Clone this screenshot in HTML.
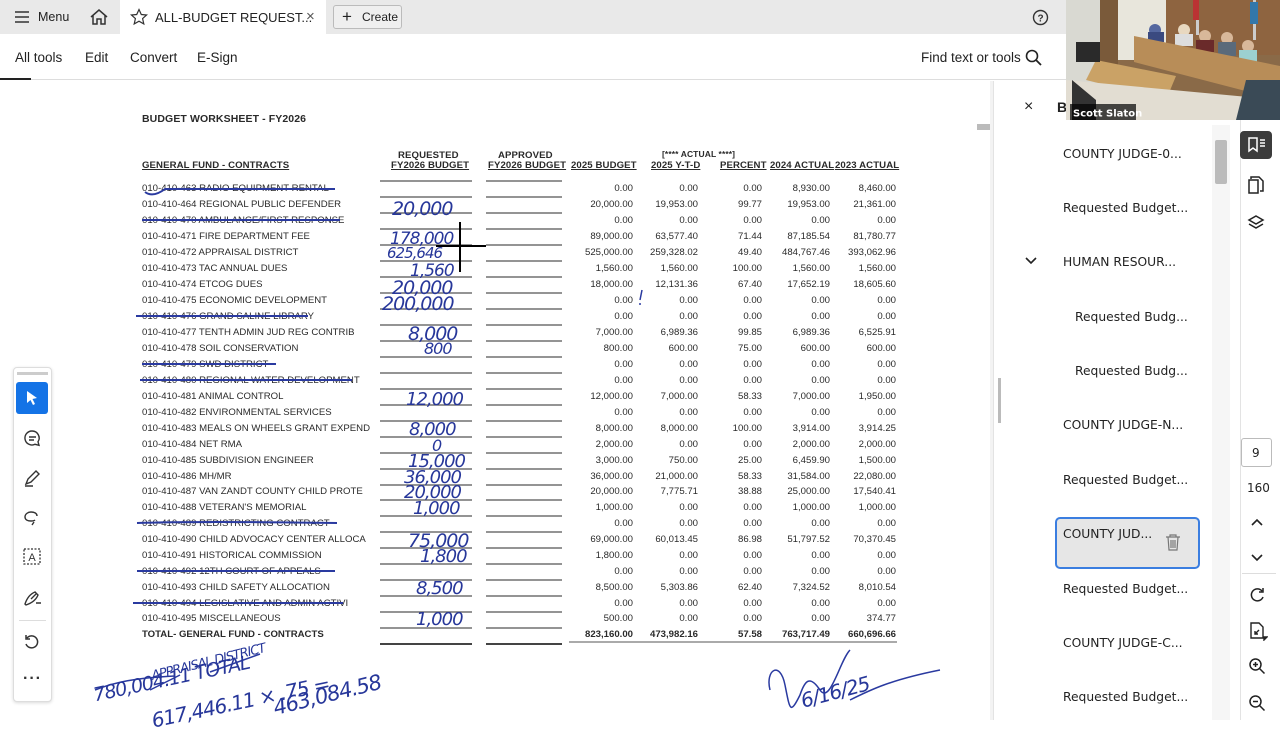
<!DOCTYPE html>
<html><head><meta charset="utf-8"><style>
*{margin:0;padding:0;box-sizing:border-box}
body{width:1280px;height:720px;overflow:hidden;background:#fff;font-family:"Liberation Sans",Arial,sans-serif;position:relative;color:#222}
.a{position:absolute}
.top{left:0;top:0;width:1280px;height:34px;background:#e9e9e9}
.t{font-size:12.5px;color:#222;white-space:nowrap}
.tb{left:0;top:34px;width:1280px;height:46px;background:#fff;border-bottom:1px solid #ddd}
.doc{font-size:9.6px;color:#2a2a2a;white-space:nowrap;letter-spacing:0.1px}
.r{position:absolute;left:0;width:990px;height:12px}
.r span{position:absolute;top:0;font-size:9.6px;color:#2a2a2a;white-space:nowrap}
.n{left:142px}
.c1,.c2,.c3,.c4,.c5{text-align:right}
.c1{left:553px;width:80px}.c2{left:618px;width:80px}.c3{left:702px;width:60px}.c4{left:750px;width:80px}.c5{left:816px;width:80px}
.hw{position:absolute;font-family:"DejaVu Sans",sans-serif;font-style:italic;color:#27379a;font-size:17px;letter-spacing:-1px;white-space:nowrap}
.rp{font-size:13.5px;color:#222;white-space:nowrap}
.ic{position:absolute}
</style></head><body>
<div class="a top"></div>
<div class="a" style="left:120px;top:0;width:206px;height:34px;background:#fff"></div>
<svg class="ic" style="left:14px;top:10px" width="16" height="14"><path d="M1 2h14M1 7h14M1 12h14" stroke="#333" stroke-width="1.5"/></svg>
<div class="a t" style="left:38px;top:10px">Menu</div>
<svg class="ic" style="left:89px;top:8px" width="20" height="18"><path d="M2 9L10 2l8 7M4 7v9h4v-5h4v5h4V7" fill="none" stroke="#333" stroke-width="1.5"/></svg>
<svg class="ic" style="left:130px;top:8px" width="18" height="18"><path d="M9 1.5l2.3 5 5.3.5-4 3.6 1.2 5.3L9 13.2l-4.8 2.7 1.2-5.3-4-3.6 5.3-.5z" fill="none" stroke="#333" stroke-width="1.2"/></svg>
<div class="a t" style="left:155px;top:10px;font-size:13px">ALL-BUDGET REQUEST...</div>
<div class="a t" style="left:306px;top:8px;font-size:15px;color:#555">×</div>
<div class="a" style="left:333px;top:5px;width:69px;height:24px;border:1px solid #bbb;border-radius:3px;background:#efefef"></div>
<div class="a t" style="left:342px;top:7px;font-size:17px">+</div>
<div class="a t" style="left:362px;top:10px;font-size:12px">Create</div>
<svg class="ic" style="left:1032px;top:9px" width="17" height="17"><circle cx="8.5" cy="8.5" r="7" fill="none" stroke="#333" stroke-width="1.4"/><text x="8.5" y="12.5" font-size="10" text-anchor="middle" font-family="Liberation Sans" font-weight="bold" fill="#333">?</text></svg>

<div class="a tb"></div>
<div class="a rp" style="left:15px;top:50px">All tools</div>
<div class="a" style="left:0;top:78px;width:31px;height:2px;background:#222"></div>
<div class="a rp" style="left:85px;top:50px">Edit</div>
<div class="a rp" style="left:130px;top:50px">Convert</div>
<div class="a rp" style="left:197px;top:50px">E-Sign</div>
<div class="a rp" style="left:921px;top:50px">Find text or tools</div>
<svg class="ic" style="left:1025px;top:49px" width="18" height="18"><circle cx="7" cy="7" r="5.5" fill="none" stroke="#222" stroke-width="1.6"/><path d="M11 11l5 5" stroke="#222" stroke-width="1.8"/></svg>

<div class="a" style="left:977px;top:124px;width:13px;height:6px;background:#bbb"></div>
<div class="a" style="left:990px;top:81px;width:3px;height:639px;background:#f3f3f3"></div>

<div class="a doc" style="left:142px;top:113px;font-weight:bold;font-size:10.5px">BUDGET WORKSHEET - FY2026</div>
<div class="a doc" style="left:142px;top:160px;font-weight:bold;text-decoration:underline">GENERAL FUND -  CONTRACTS</div>
<div class="a doc" style="left:398px;top:150px;font-weight:bold">REQUESTED</div>
<div class="a doc" style="left:391px;top:160px;font-weight:bold;text-decoration:underline">FY2026 BUDGET</div>
<div class="a doc" style="left:498px;top:150px;font-weight:bold">APPROVED</div>
<div class="a doc" style="left:488px;top:160px;font-weight:bold;text-decoration:underline">FY2026 BUDGET</div>
<div class="a doc" style="left:571px;top:160px;font-weight:bold;text-decoration:underline">2025 BUDGET</div>
<div class="a doc" style="left:662px;top:149px;font-weight:bold;font-size:8.5px">[**** ACTUAL ****]</div>
<div class="a doc" style="left:651px;top:160px;font-weight:bold;text-decoration:underline">2025 Y-T-D</div>
<div class="a doc" style="left:720px;top:160px;font-weight:bold;text-decoration:underline">PERCENT</div>
<div class="a doc" style="left:770px;top:160px;font-weight:bold;text-decoration:underline">2024 ACTUAL</div>
<div class="a doc" style="left:835px;top:160px;font-weight:bold;text-decoration:underline">2023 ACTUAL</div>

<div class="r" style="top:183px"><span class="n">010-410-463 RADIO EQUIPMENT RENTAL</span><span class="c1">0.00</span><span class="c2">0.00</span><span class="c3">0.00</span><span class="c4">8,930.00</span><span class="c5">8,460.00</span></div>
<div class="r" style="top:199px"><span class="n">010-410-464 REGIONAL PUBLIC DEFENDER</span><span class="c1">20,000.00</span><span class="c2">19,953.00</span><span class="c3">99.77</span><span class="c4">19,953.00</span><span class="c5">21,361.00</span></div>
<div class="r" style="top:215px"><span class="n">010-410-470 AMBULANCE/FIRST RESPONSE</span><span class="c1">0.00</span><span class="c2">0.00</span><span class="c3">0.00</span><span class="c4">0.00</span><span class="c5">0.00</span></div>
<div class="r" style="top:231px"><span class="n">010-410-471 FIRE DEPARTMENT FEE</span><span class="c1">89,000.00</span><span class="c2">63,577.40</span><span class="c3">71.44</span><span class="c4">87,185.54</span><span class="c5">81,780.77</span></div>
<div class="r" style="top:247px"><span class="n">010-410-472 APPRAISAL DISTRICT</span><span class="c1">525,000.00</span><span class="c2">259,328.02</span><span class="c3">49.40</span><span class="c4">484,767.46</span><span class="c5">393,062.96</span></div>
<div class="r" style="top:263px"><span class="n">010-410-473 TAC ANNUAL DUES</span><span class="c1">1,560.00</span><span class="c2">1,560.00</span><span class="c3">100.00</span><span class="c4">1,560.00</span><span class="c5">1,560.00</span></div>
<div class="r" style="top:279px"><span class="n">010-410-474 ETCOG DUES</span><span class="c1">18,000.00</span><span class="c2">12,131.36</span><span class="c3">67.40</span><span class="c4">17,652.19</span><span class="c5">18,605.60</span></div>
<div class="r" style="top:295px"><span class="n">010-410-475 ECONOMIC DEVELOPMENT</span><span class="c1">0.00</span><span class="c2">0.00</span><span class="c3">0.00</span><span class="c4">0.00</span><span class="c5">0.00</span></div>
<div class="r" style="top:311px"><span class="n">010-410-476 GRAND SALINE LIBRARY</span><span class="c1">0.00</span><span class="c2">0.00</span><span class="c3">0.00</span><span class="c4">0.00</span><span class="c5">0.00</span></div>
<div class="r" style="top:327px"><span class="n">010-410-477 TENTH ADMIN JUD REG CONTRIB</span><span class="c1">7,000.00</span><span class="c2">6,989.36</span><span class="c3">99.85</span><span class="c4">6,989.36</span><span class="c5">6,525.91</span></div>
<div class="r" style="top:343px"><span class="n">010-410-478 SOIL CONSERVATION</span><span class="c1">800.00</span><span class="c2">600.00</span><span class="c3">75.00</span><span class="c4">600.00</span><span class="c5">600.00</span></div>
<div class="r" style="top:359px"><span class="n">010-410-479 SWD DISTRICT</span><span class="c1">0.00</span><span class="c2">0.00</span><span class="c3">0.00</span><span class="c4">0.00</span><span class="c5">0.00</span></div>
<div class="r" style="top:375px"><span class="n">010-410-480 REGIONAL WATER DEVELOPMENT</span><span class="c1">0.00</span><span class="c2">0.00</span><span class="c3">0.00</span><span class="c4">0.00</span><span class="c5">0.00</span></div>
<div class="r" style="top:391px"><span class="n">010-410-481 ANIMAL CONTROL</span><span class="c1">12,000.00</span><span class="c2">7,000.00</span><span class="c3">58.33</span><span class="c4">7,000.00</span><span class="c5">1,950.00</span></div>
<div class="r" style="top:407px"><span class="n">010-410-482 ENVIRONMENTAL SERVICES</span><span class="c1">0.00</span><span class="c2">0.00</span><span class="c3">0.00</span><span class="c4">0.00</span><span class="c5">0.00</span></div>
<div class="r" style="top:423px"><span class="n">010-410-483 MEALS ON WHEELS GRANT EXPEND</span><span class="c1">8,000.00</span><span class="c2">8,000.00</span><span class="c3">100.00</span><span class="c4">3,914.00</span><span class="c5">3,914.25</span></div>
<div class="r" style="top:439px"><span class="n">010-410-484 NET RMA</span><span class="c1">2,000.00</span><span class="c2">0.00</span><span class="c3">0.00</span><span class="c4">2,000.00</span><span class="c5">2,000.00</span></div>
<div class="r" style="top:455px"><span class="n">010-410-485 SUBDIVISION ENGINEER</span><span class="c1">3,000.00</span><span class="c2">750.00</span><span class="c3">25.00</span><span class="c4">6,459.90</span><span class="c5">1,500.00</span></div>
<div class="r" style="top:471px"><span class="n">010-410-486 MH/MR</span><span class="c1">36,000.00</span><span class="c2">21,000.00</span><span class="c3">58.33</span><span class="c4">31,584.00</span><span class="c5">22,080.00</span></div>
<div class="r" style="top:486px"><span class="n">010-410-487 VAN ZANDT COUNTY CHILD PROTE</span><span class="c1">20,000.00</span><span class="c2">7,775.71</span><span class="c3">38.88</span><span class="c4">25,000.00</span><span class="c5">17,540.41</span></div>
<div class="r" style="top:502px"><span class="n">010-410-488 VETERAN'S MEMORIAL</span><span class="c1">1,000.00</span><span class="c2">0.00</span><span class="c3">0.00</span><span class="c4">1,000.00</span><span class="c5">1,000.00</span></div>
<div class="r" style="top:518px"><span class="n">010-410-489 REDISTRICTING CONTRACT</span><span class="c1">0.00</span><span class="c2">0.00</span><span class="c3">0.00</span><span class="c4">0.00</span><span class="c5">0.00</span></div>
<div class="r" style="top:534px"><span class="n">010-410-490 CHILD ADVOCACY CENTER ALLOCA</span><span class="c1">69,000.00</span><span class="c2">60,013.45</span><span class="c3">86.98</span><span class="c4">51,797.52</span><span class="c5">70,370.45</span></div>
<div class="r" style="top:550px"><span class="n">010-410-491 HISTORICAL COMMISSION</span><span class="c1">1,800.00</span><span class="c2">0.00</span><span class="c3">0.00</span><span class="c4">0.00</span><span class="c5">0.00</span></div>
<div class="r" style="top:566px"><span class="n">010-410-492 12TH COURT OF APPEALS</span><span class="c1">0.00</span><span class="c2">0.00</span><span class="c3">0.00</span><span class="c4">0.00</span><span class="c5">0.00</span></div>
<div class="r" style="top:582px"><span class="n">010-410-493 CHILD SAFETY ALLOCATION</span><span class="c1">8,500.00</span><span class="c2">5,303.86</span><span class="c3">62.40</span><span class="c4">7,324.52</span><span class="c5">8,010.54</span></div>
<div class="r" style="top:598px"><span class="n">010-410-494 LEGISLATIVE AND ADMIN ACTIVI</span><span class="c1">0.00</span><span class="c2">0.00</span><span class="c3">0.00</span><span class="c4">0.00</span><span class="c5">0.00</span></div>
<div class="r" style="top:613px"><span class="n">010-410-495 MISCELLANEOUS</span><span class="c1">500.00</span><span class="c2">0.00</span><span class="c3">0.00</span><span class="c4">0.00</span><span class="c5">374.77</span></div>
<div class="r" style="top:629px"><span class="n" style="font-weight:bold">TOTAL- GENERAL FUND -  CONTRACTS</span><span class="c1" style="font-weight:bold">823,160.00</span><span class="c2" style="font-weight:bold">473,982.16</span><span class="c3" style="font-weight:bold">57.58</span><span class="c4" style="font-weight:bold">763,717.49</span><span class="c5" style="font-weight:bold">660,696.66</span></div>

<svg class="a" style="left:0;top:0" width="990" height="720">
<g stroke="#555" stroke-width="1.2">
<path d="M380 181h92M486 181h76M380 197h92M486 197h76M380 213h92M486 213h76M380 229h92M486 229h76M380 245h92M486 245h76M380 261h92M486 261h76M380 277h92M486 277h76M380 293h92M486 293h76M380 309h92M486 309h76M380 325h92M486 325h76M380 341h92M486 341h76M380 357h92M486 357h76M380 373h92M486 373h76M380 389h92M486 389h76M380 405h92M486 405h76M380 421h92M486 421h76M380 437h92M486 437h76M380 453h92M486 453h76M380 469h92M486 469h76M380 485h92M486 485h76M380 500h92M486 500h76M380 516h92M486 516h76M380 532h92M486 532h76M380 548h92M486 548h76M380 564h92M486 564h76M380 580h92M486 580h76M380 596h92M486 596h76M380 612h92M486 612h76M380 628h92M486 628h76"/>
<path d="M569 642h328" stroke-width="1"/>
</g>
<g stroke="#2a3aa0" stroke-width="2" fill="none">
<path d="M380 644h92M486 644h76" stroke="#444" stroke-width="2"/>
<path d="M145 192q8 6 20-3h170"/><path d="M142 220h198"/><path d="M136 316h172"/><path d="M142 364h134"/><path d="M140 380h212"/><path d="M137 523q60-2 200 0"/><path d="M137 571h198"/><path d="M133 603h210"/>
<path d="M95 690c20-8 40-12 80-14M150 690l30-15M210 672l50-18" stroke-width="1.5"/>
<path d="M770 690c-5-20 10-30 15-5s5 30 15 10c5-15 10-20 20-5s20-30 30-40M850 700c20-10 40-20 90-30" stroke-width="1.5"/>
<path d="M642 290l-2 10M640 303v2" stroke-width="1.5"/>
</g>
<path d="M460 222v50M436 246h50" stroke="#000" stroke-width="2"/>
</svg>
<div class="hw" style="left:392px;top:198px;font-size:19px">20,000</div>
<div class="hw" style="left:390px;top:229px;font-size:17px">178,000</div>
<div class="hw" style="left:387px;top:244px;font-size:15px">625,646</div>
<div class="hw" style="left:410px;top:261px;font-size:17px">1,560</div>
<div class="hw" style="left:392px;top:277px;font-size:19px">20,000</div>
<div class="hw" style="left:382px;top:293px;font-size:19px">200,000</div>
<div class="hw" style="left:408px;top:323px;font-size:19px">8,000</div>
<div class="hw" style="left:424px;top:339px;font-size:16px">800</div>
<div class="hw" style="left:406px;top:389px;font-size:18px">12,000</div>
<div class="hw" style="left:409px;top:419px;font-size:18px">8,000</div>
<div class="hw" style="left:432px;top:436px;font-size:16px">0</div>
<div class="hw" style="left:408px;top:451px;font-size:18px">15,000</div>
<div class="hw" style="left:404px;top:467px;font-size:18px">36,000</div>
<div class="hw" style="left:404px;top:482px;font-size:18px">20,000</div>
<div class="hw" style="left:413px;top:498px;font-size:18px">1,000</div>
<div class="hw" style="left:408px;top:530px;font-size:19px">75,000</div>
<div class="hw" style="left:420px;top:546px;font-size:18px">1,800</div>
<div class="hw" style="left:416px;top:578px;font-size:18px">8,500</div>
<div class="hw" style="left:416px;top:609px;font-size:18px">1,000</div>
<div class="hw" style="left:92px;top:668px;font-size:19px;transform:rotate(-12deg)">780,004.11 TOTAL</div>
<div class="hw" style="left:150px;top:655px;font-size:13px;transform:rotate(-14deg)">APPRAISAL DISTRICT</div>
<div class="hw" style="left:150px;top:690px;font-size:20px;transform:rotate(-12deg)">617,446.11 × .75 =</div>
<div class="hw" style="left:272px;top:683px;font-size:21px;transform:rotate(-14deg)">463,084.58</div>
<div class="hw" style="left:800px;top:680px;font-size:20px;transform:rotate(-15deg)">6/16/25</div>

<div class="a" style="left:13px;top:367px;width:39px;height:335px;background:#fff;border:1px solid #ddd;border-radius:4px;box-shadow:0 1px 3px rgba(0,0,0,.15)"></div>
<div class="a" style="left:17px;top:372px;width:31px;height:3px;background:#ccc"></div>
<div class="a" style="left:16px;top:382px;width:32px;height:32px;background:#1473e6;border-radius:3px"></div>
<svg class="ic" style="left:24px;top:389px" width="18" height="18"><path d="M3 2l10 7-4.5 1 2.5 5-2 1-2.5-5L3 14z" fill="#fff"/></svg>
<svg class="ic" style="left:22px;top:428px" width="22" height="22" fill="none" stroke="#333" stroke-width="1.4"><path d="M10 3a7 7 0 1 0 3 13.3l4 1-1-3.5A7 7 0 0 0 10 3zM7 9h7M7 12h5"/></svg>
<svg class="ic" style="left:22px;top:467px" width="22" height="22" fill="none" stroke="#333" stroke-width="1.4"><path d="M4 17l2-5 8-8 3 3-8 8zM3 19h8"/></svg>
<svg class="ic" style="left:22px;top:507px" width="22" height="22" fill="none" stroke="#333" stroke-width="1.4"><path d="M15 9c0-3-3-4-6-4S3 7 3 10s3 4 6 4c2 0 3 0 4-1M12 15l-2 3"/></svg>
<svg class="ic" style="left:22px;top:546px" width="22" height="22" fill="none" stroke="#333" stroke-width="1.3"><rect x="2" y="3" width="16" height="15" stroke-dasharray="2 1.5"/><text x="10" y="15" font-size="11" text-anchor="middle" fill="#333" stroke="none" font-family="Liberation Sans">A</text></svg>
<svg class="ic" style="left:22px;top:587px" width="22" height="22" fill="none" stroke="#333" stroke-width="1.4"><path d="M3 17c2-6 5-10 10-12l3 3c-2 5-6 8-12 10zM9 12l5-5M14 16h5"/></svg>
<div class="a" style="left:19px;top:620px;width:27px;height:1px;background:#ddd"></div>
<svg class="ic" style="left:23px;top:633px" width="18" height="18" fill="none" stroke="#333" stroke-width="1.5"><path d="M4 5a6 6 0 1 1-1 6M3 2v4h4"/></svg>
<div class="a" style="left:23px;top:670px;font-size:16px;color:#333;font-weight:bold;letter-spacing:1px">···</div>

<div class="a" style="left:993px;top:81px;width:1px;height:639px;background:#e3e3e3"></div>
<div class="a" style="left:998px;top:378px;width:3px;height:45px;background:#bbb"></div>
<div class="a" style="left:1024px;top:98px;font-size:16px;color:#222">×</div>
<div class="a" style="left:1057px;top:99px;font-size:14px;font-weight:bold">B</div>
<div class="a" style="left:1212px;top:125px;width:18px;height:595px;background:#f6f6f6"></div>
<div class="a" style="left:1215px;top:140px;width:12px;height:44px;background:#bbb;border-radius:2px"></div>
<div class="a" style="left:1240px;top:120px;width:1px;height:600px;background:#e3e3e3"></div>
<div class="a rp" style="left:1063px;top:147px;font-family:'DejaVu Sans',sans-serif;font-size:12.3px;color:#222">COUNTY JUDGE-0...</div>
<div class="a rp" style="left:1063px;top:201px;font-family:'DejaVu Sans',sans-serif;font-size:12.3px;color:#222">Requested Budget...</div>
<svg class="ic" style="left:1024px;top:256px" width="14" height="10"><path d="M2 2l5 5 5-5" fill="none" stroke="#222" stroke-width="1.6"/></svg>
<div class="a rp" style="left:1063px;top:255px;font-family:'DejaVu Sans',sans-serif;font-size:12.3px;color:#222">HUMAN RESOUR...</div>
<div class="a rp" style="left:1075px;top:310px;font-family:'DejaVu Sans',sans-serif;font-size:12.3px;color:#222">Requested Budg...</div>
<div class="a rp" style="left:1075px;top:364px;font-family:'DejaVu Sans',sans-serif;font-size:12.3px;color:#222">Requested Budg...</div>
<div class="a rp" style="left:1063px;top:418px;font-family:'DejaVu Sans',sans-serif;font-size:12.3px;color:#222">COUNTY JUDGE-N...</div>
<div class="a rp" style="left:1063px;top:473px;font-family:'DejaVu Sans',sans-serif;font-size:12.3px;color:#222">Requested Budget...</div>
<div class="a" style="left:1055px;top:517px;width:145px;height:52px;background:#e6e6e6;border:2px solid #3b7ee0;border-radius:5px"></div>
<div class="a rp" style="left:1063px;top:527px;font-family:'DejaVu Sans',sans-serif;font-size:12.3px;color:#222">COUNTY JUD...</div>
<svg class="ic" style="left:1164px;top:533px" width="18" height="18" fill="none" stroke="#777" stroke-width="1.2"><path d="M2 4h14M6 4V2h6v2M4 4l1 13h8l1-13M7 7v8M9 7v8M11 7v8"/></svg>
<div class="a rp" style="left:1063px;top:582px;font-family:'DejaVu Sans',sans-serif;font-size:12.3px;color:#222">Requested Budget...</div>
<div class="a rp" style="left:1063px;top:636px;font-family:'DejaVu Sans',sans-serif;font-size:12.3px;color:#222">COUNTY JUDGE-C...</div>
<div class="a rp" style="left:1063px;top:690px;font-family:'DejaVu Sans',sans-serif;font-size:12.3px;color:#222">Requested Budget...</div>

<div class="a" style="left:1240px;top:131px;width:32px;height:28px;background:#3c3c3c;border-radius:4px"></div>
<svg class="ic" style="left:1247px;top:136px" width="20" height="18" fill="none" stroke="#fff" stroke-width="1.5"><path d="M2 2h8v13l-4-3-4 3zM13 4h5M13 7h5M13 10h5"/></svg>
<svg class="ic" style="left:1247px;top:175px" width="18" height="20" fill="none" stroke="#222" stroke-width="1.5"><path d="M4 4V2h8l4 4v10h-3M2 5h9v13H2z"/></svg>
<svg class="ic" style="left:1247px;top:214px" width="18" height="18" fill="none" stroke="#222" stroke-width="1.5"><path d="M9 2l7 4-7 4-7-4zM2 10l7 4 7-4"/></svg>
<div class="a" style="left:1241px;top:438px;width:31px;height:29px;border:1px solid #bbb;border-radius:3px;background:#fff"></div>
<div class="a" style="left:1252px;top:446px;font-size:12px;font-family:'DejaVu Sans',sans-serif">9</div>
<div class="a" style="left:1247px;top:481px;font-size:12px;font-family:'DejaVu Sans',sans-serif">160</div>
<svg class="ic" style="left:1250px;top:517px" width="14" height="10"><path d="M2 8l5-5 5 5" fill="none" stroke="#222" stroke-width="1.6"/></svg>
<svg class="ic" style="left:1250px;top:553px" width="14" height="10"><path d="M2 2l5 5 5-5" fill="none" stroke="#222" stroke-width="1.6"/></svg>
<div class="a" style="left:1242px;top:573px;width:34px;height:1px;background:#ddd"></div>
<svg class="ic" style="left:1248px;top:586px" width="18" height="18" fill="none" stroke="#222" stroke-width="1.5"><path d="M14 5a6 6 0 1 0 1 6M15 2v4h-4"/></svg>
<svg class="ic" style="left:1248px;top:621px" width="20" height="20" fill="none" stroke="#222" stroke-width="1.4"><path d="M3 2h8l4 4v11H3zM7 13l4-4M7 10v3h3"/><path d="M16 16l3 0-3 3z" fill="#222"/></svg>
<svg class="ic" style="left:1248px;top:657px" width="18" height="18" fill="none" stroke="#222" stroke-width="1.5"><circle cx="7.5" cy="7.5" r="5.5"/><path d="M11.5 11.5l5 5M5 7.5h5M7.5 5v5"/></svg>
<svg class="ic" style="left:1248px;top:694px" width="18" height="18" fill="none" stroke="#222" stroke-width="1.5"><circle cx="7.5" cy="7.5" r="5.5"/><path d="M11.5 11.5l5 5M5 7.5h5"/></svg>

<!-- video -->
<svg class="a" style="left:1066px;top:0" width="214" height="120" viewBox="0 0 214 120">
<rect width="214" height="120" fill="#8a6a48"/>
<rect x="0" y="0" width="34" height="120" fill="#d9d9d2"/>
<rect x="34" y="0" width="18" height="70" fill="#7a5a3a"/>
<rect x="52" y="0" width="48" height="60" fill="#e8e6dc"/>
<rect x="100" y="0" width="114" height="55" fill="#8e6440"/>
<rect x="130" y="0" width="3" height="35" fill="#ccc"/><rect x="127" y="0" width="6" height="20" fill="#b33"/>
<rect x="187" y="0" width="3" height="40" fill="#ccc"/><rect x="184" y="2" width="8" height="22" fill="#37a"/>
<circle cx="89" cy="30" r="6" fill="#5568a0"/><rect x="82" y="32" width="16" height="10" fill="#3a4a80"/>
<circle cx="118" cy="30" r="6" fill="#e8d8c0"/><rect x="109" y="34" width="18" height="12" fill="#ddd"/>
<circle cx="139" cy="36" r="6" fill="#d8b89a"/><rect x="130" y="40" width="18" height="12" fill="#6a2a2a"/>
<circle cx="161" cy="38" r="6" fill="#d8b89a"/><rect x="152" y="42" width="18" height="14" fill="#5a6a7a"/>
<circle cx="182" cy="46" r="6" fill="#d8b89a"/><rect x="173" y="50" width="18" height="14" fill="#9cd0d0"/>
<polygon points="68,36 214,66 214,100 68,62" fill="#b88d58"/>
<polygon points="30,60 110,76 100,100 20,80" fill="#caa266"/>
<polygon points="0,80 214,100 214,120 0,120" fill="#e2ddd2"/>
<polygon points="6,80 30,100 30,120 6,120" fill="#333"/>
<rect x="10" y="42" width="24" height="20" fill="#2a2a2a"/>
<polygon points="180,80 214,80 214,120 170,120" fill="#3a4a56"/>
<rect x="4" y="104" width="66" height="16" fill="rgba(0,0,0,.7)"/>
<text x="7" y="116.5" font-size="10" font-weight="bold" fill="#fff" font-family="DejaVu Sans">Scott Slaton</text>
</svg>
</body></html>
